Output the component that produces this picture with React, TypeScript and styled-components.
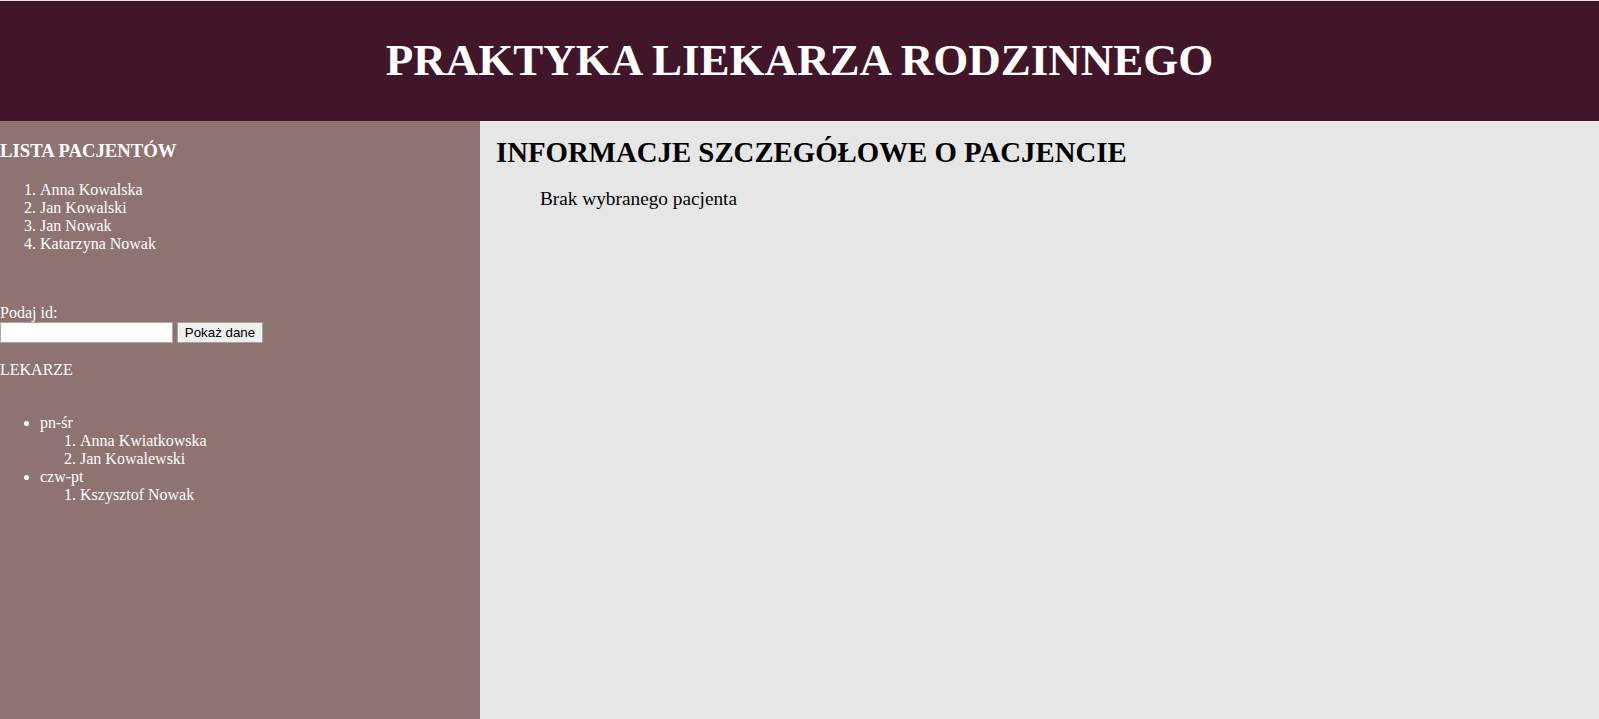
import React from "react";
import styled, { createGlobalStyle } from "styled-components";

const GlobalStyle = createGlobalStyle`
  html, body {
    margin: 0;
    padding: 0;
    background: #e6e6e6;
    font-family: "Liberation Serif", "Times New Roman", serif;
    font-size: 16px;
  }
  * { box-sizing: border-box; }
`;

const Page = styled.div`
  display: flex;
  flex-direction: column;
  min-height: 100vh;
  padding-top: 1px;
`;

const Header = styled.header`
  height: 120px;
  background: #42162a;
  display: flex;
  align-items: center;
  justify-content: center;
`;

const Title = styled.h1`
  margin: 0;
  color: #ffffff;
  font-size: 45px;
  font-weight: bold;
  line-height: 1.15;
`;

const Main = styled.main`
  flex: 1;
  display: grid;
  grid-template-columns: 480px 1fr;
`;

const Sidebar = styled.aside`
  background: #8f7370;
  color: #ffffff;
  line-height: 18px;
  padding-bottom: 24px;
`;

const SideHeading = styled.h3`
  margin: 19px 0 0;
  font-size: 18.72px;
  line-height: 21.5px;
  font-weight: bold;
`;

const NumberedList = styled.ol<{ $top?: number }>`
  margin: ${(p) => p.$top ?? 0}px 0 0;
  padding-left: 40px;
  list-style: decimal;
`;

const BulletList = styled.ul`
  margin: 35px 0 0;
  padding-left: 40px;
  list-style: disc;
`;

const Item = styled.li``;

const IdForm = styled.form`
  margin-top: 51px;
`;

const Label = styled.label`
  display: block;
`;

const FormRow = styled.div`
  display: flex;
  gap: 4px;
  height: 21px;
`;

const TextInput = styled.input`
  width: 173px;
  height: 21px;
  border: 1px solid #a9a9a9;
  background: #ffffff;
  padding: 1px 2px;
  font-family: "Liberation Sans", Arial, sans-serif;
  font-size: 13.33px;
`;

const Button = styled.button`
  width: 86px;
  height: 21px;
  padding: 0 6px;
  border: 1px solid #a3a3a3;
  background: #f0f0f0;
  color: #000000;
  font-family: "Liberation Sans", Arial, sans-serif;
  font-size: 13.33px;
  line-height: 19px;
`;

const SectionLabel = styled.p`
  margin: 18px 0 0;
`;

const Content = styled.section`
  background: #e6e6e6;
  color: #000000;
  padding-left: 16px;
`;

const ContentHeading = styled.h2`
  margin: 14.5px 0 0;
  font-size: 28.8px;
  line-height: 33px;
  font-weight: bold;
`;

const Message = styled.p`
  margin: 19px 0 0 44px;
  font-size: 19.3px;
  line-height: 22px;
`;

const patients = ["Anna Kowalska", "Jan Kowalski", "Jan Nowak", "Katarzyna Nowak"];

const schedule = [
  { days: "pn-śr", doctors: ["Anna Kwiatkowska", "Jan Kowalewski"] },
  { days: "czw-pt", doctors: ["Kszysztof Nowak"] },
];

export default function App() {
  return (
    <>
      <GlobalStyle />
      <Page>
        <Header>
          <Title>PRAKTYKA LIEKARZA RODZINNEGO</Title>
        </Header>
        <Main>
          <Sidebar>
            <SideHeading>LISTA PACJENTÓW</SideHeading>
            <NumberedList $top={19.5}>
              {patients.map((p) => (
                <Item key={p}>{p}</Item>
              ))}
            </NumberedList>
            <IdForm onSubmit={(e) => e.preventDefault()}>
              <Label htmlFor="pid">Podaj id:</Label>
              <FormRow>
                <TextInput id="pid" type="text" />
                <Button type="submit">Pokaż dane</Button>
              </FormRow>
            </IdForm>
            <SectionLabel>LEKARZE</SectionLabel>
            <BulletList>
              {schedule.map((s) => (
                <Item key={s.days}>
                  {s.days}
                  <NumberedList>
                    {s.doctors.map((d) => (
                      <Item key={d}>{d}</Item>
                    ))}
                  </NumberedList>
                </Item>
              ))}
            </BulletList>
          </Sidebar>
          <Content>
            <ContentHeading>INFORMACJE SZCZEGÓŁOWE O PACJENCIE</ContentHeading>
            <Message>Brak wybranego pacjenta</Message>
          </Content>
        </Main>
      </Page>
    </>
  );
}
